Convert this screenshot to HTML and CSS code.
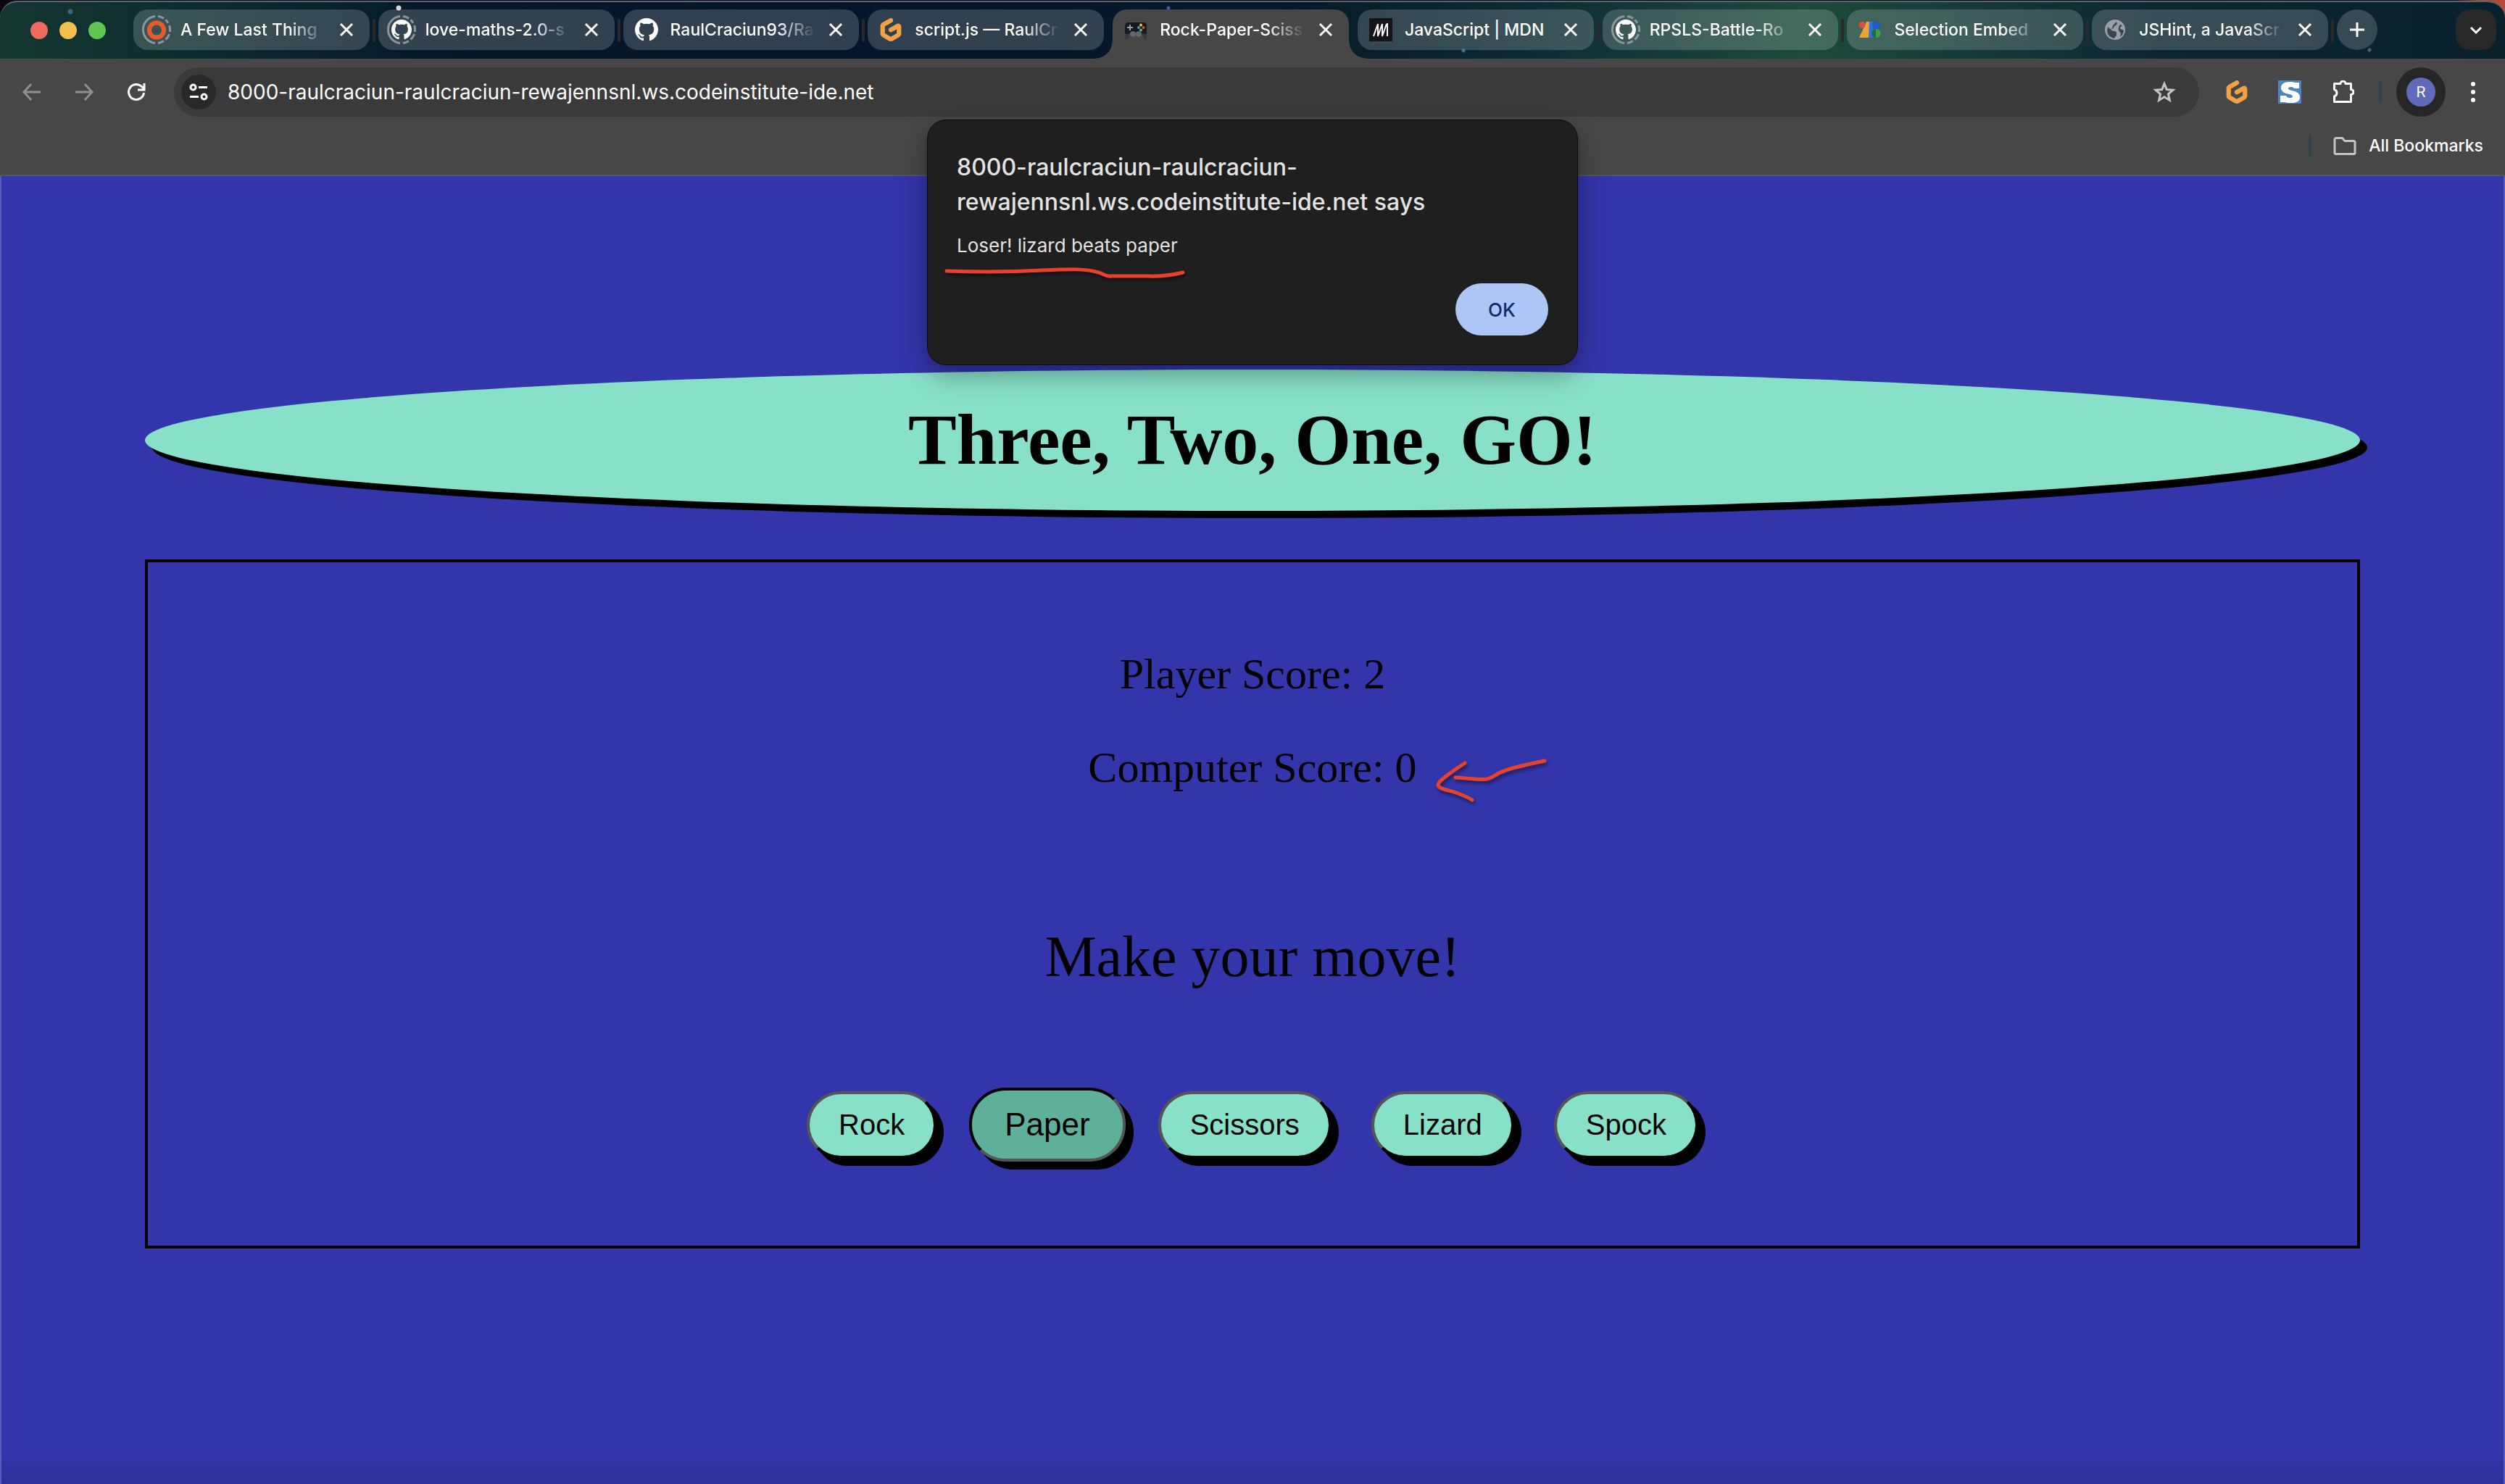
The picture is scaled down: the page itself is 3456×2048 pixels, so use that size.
FILE: index.html
```html
<!DOCTYPE html>
<html lang="en">
<head>
<meta charset="utf-8">
<title>Rock-Paper-Scissors-Lizard-Spock</title>
<link rel="stylesheet" href="styles.css">
</head>
<body>
<svg class="sprite" aria-hidden="true">
  <symbol id="github" viewBox="0 0 16 16"><path fill="#fff" d="M8 0C3.58 0 0 3.58 0 8c0 3.54 2.29 6.53 5.47 7.59.4.07.55-.17.55-.38 0-.19-.01-.82-.01-1.49-2.01.37-2.53-.49-2.69-.94-.09-.23-.48-.94-.82-1.13-.28-.15-.68-.52-.01-.53.63-.01 1.08.58 1.23.82.72 1.21 1.87.87 2.33.66.07-.52.28-.87.51-1.07-1.78-.2-3.64-.89-3.64-3.95 0-.87.31-1.59.82-2.15-.08-.2-.36-1.02.08-2.12 0 0 .67-.21 2.2.82.64-.18 1.32-.27 2-.27s1.36.09 2 .27c1.53-1.04 2.2-.82 2.2-.82.44 1.1.16 1.92.08 2.12.51.56.82 1.27.82 2.15 0 3.07-1.87 3.75-3.65 3.95.29.25.54.73.54 1.48 0 1.07-.01 1.93-.01 2.2 0 .21.15.46.55.38A8.01 8.01 0 0 0 16 8c0-4.42-3.58-8-8-8z"/></symbol>
  <symbol id="gitpod" viewBox="0 0 24 24"><path fill="#f3a145" d="M14.033 1.195a2.387 2.387 0 0 1-.87 3.235l-6.98 4.04a.602.602 0 0 0-.3.522v6.342a.6.6 0 0 0 .3.521l5.524 3.199a.585.585 0 0 0 .586 0l5.527-3.199a.603.603 0 0 0 .299-.52V11.39l-4.969 2.838a2.326 2.326 0 0 1-3.19-.9 2.388 2.388 0 0 1 .896-3.23l7.108-4.062C20.123 4.8 22.8 6.384 22.8 8.901v6.914a4.524 4.524 0 0 1-2.245 3.919l-6.345 3.672a4.407 4.407 0 0 1-4.422 0l-6.344-3.672A4.524 4.524 0 0 1 1.2 15.816V8.51a4.524 4.524 0 0 1 2.245-3.918l7.393-4.28a2.326 2.326 0 0 1 3.195.883z"/></symbol>
  <symbol id="ring" viewBox="0 0 40 40"><g fill="none" stroke="#8b979a" stroke-width="3"><path d="M18 1.600A18.500 18.500 0 0 0 18 38.400"/><path d="M22 38.400A18.500 18.500 0 0 0 30 35.600"/><path d="M32.500 33.600A18.500 18.500 0 0 0 37.600 26"/><path d="M38.300 23A18.500 18.500 0 0 0 37.600 14"/><path d="M36 10.700A18.500 18.500 0 0 0 32.500 6.400"/><path d="M30 4.400A18.500 18.500 0 0 0 22 1.600"/></g></symbol>
  <symbol id="close" viewBox="0 0 32 32"><path d="M8 8l16 16M24 8L8 24" fill="none" stroke="#fff" stroke-width="3"/></symbol>
</svg>

<header class="browser">
  <div class="tabstrip">
    <div class="lights"><span class="light light--close"></span><span class="light light--min"></span><span class="light light--max"></span></div>
    <nav class="tabs" aria-label="Tabs">
      <div class="tab">
        <svg class="tab__icon" viewBox="0 0 40 40"><use href="#ring"/><circle cx="20" cy="20.500" r="10" fill="none" stroke="#e95a2b" stroke-width="6"/><circle cx="20" cy="20.500" r="12" fill="none" stroke="#e95a2b" stroke-width="2" stroke-dasharray="4 1"/></svg>
        <a class="tab__title tab__title--fade" href="#">A Few Last Thing</a>
        <button class="tab__close" aria-label="Close tab"><svg class="ic32"><use href="#close"/></svg></button>
      </div>
      <div class="tab">
        <svg class="tab__icon" viewBox="0 0 40 40"><use href="#ring"/><use href="#github" x="6" y="6" width="28" height="28"/></svg>
        <a class="tab__title tab__title--fade" href="#">love-maths-2.0-s</a>
        <button class="tab__close" aria-label="Close tab"><svg class="ic32"><use href="#close"/></svg></button>
      </div>
      <div class="tab">
        <svg class="tab__icon" viewBox="0 0 40 40"><use href="#github" x="4" y="4" width="32" height="32"/></svg>
        <a class="tab__title tab__title--fade" href="#">RaulCraciun93/Ra</a>
        <button class="tab__close" aria-label="Close tab"><svg class="ic32"><use href="#close"/></svg></button>
      </div>
      <div class="tab tab--before">
        <svg class="tab__icon" viewBox="0 0 40 40"><use href="#gitpod" x="4" y="4" width="32" height="32"/></svg>
        <a class="tab__title tab__title--fade" href="#">script.js — RaulCr</a>
        <button class="tab__close" aria-label="Close tab"><svg class="ic32"><use href="#close"/></svg></button>
      </div>
      <div class="tab tab--active">
        <svg class="tab__icon" viewBox="0 0 40 40"><path d="M6 22l6 3-4 9-3-1zM34 22l-6 3 4 9 3-1z" fill="#39393b"/><path d="M9 10h22q3 0 4 4v12l-7-1-1 5h-5l-2-3-2 3h-5l-1-5-7 1V14q1-4 4-4z" fill="#18191c"/><path d="M12 13v8M8 17h8" stroke="#8fa0ae" stroke-width="2"/><circle cx="16" cy="26" r="4" fill="#5c6a74"/><circle cx="24" cy="26" r="4" fill="#5c6a74"/><circle cx="27" cy="13.500" r="2" fill="#f5c945"/><circle cx="24" cy="17" r="2" fill="#4a90e2"/><circle cx="30.500" cy="17" r="2" fill="#e0483c"/><circle cx="27" cy="20.500" r="2" fill="#5cb85c"/></svg>
        <a class="tab__title tab__title--fade" href="#">Rock-Paper-Sciss</a>
        <button class="tab__close" aria-label="Close tab"><svg class="ic32"><use href="#close"/></svg></button>
      </div>
      <div class="tab">
        <svg class="tab__icon" viewBox="0 0 40 40"><path fill="#15141a" d="M4 4h32v32H4z"/><path d="M10 29L16 12V29L22 12V29L28 12M29 11v18" fill="none" stroke="#fff" stroke-width="2"/></svg>
        <a class="tab__title" href="#">JavaScript | MDN</a>
        <button class="tab__close" aria-label="Close tab"><svg class="ic32"><use href="#close"/></svg></button>
      </div>
      <div class="tab">
        <svg class="tab__icon" viewBox="0 0 40 40"><use href="#ring"/><use href="#github" x="6" y="6" width="28" height="28"/></svg>
        <a class="tab__title tab__title--fade" href="#">RPSLS-Battle-Ro</a>
        <button class="tab__close" aria-label="Close tab"><svg class="ic32"><use href="#close"/></svg></button>
      </div>
      <div class="tab">
        <svg class="tab__icon" viewBox="0 0 40 40"><path d="M5 31L15 9h6v22z" fill="#e8a33d"/><circle cx="9" cy="13.500" r="4.500" fill="#de4b3f"/><path d="M19 9h6v22h-7z" fill="#2f6fde"/><circle cx="28.500" cy="14" r="5.500" fill="#2458c4"/><circle cx="28.500" cy="25" r="6" fill="#43a047"/><path d="M28 19v12a6 6 0 0 1 0-12z" fill="#1f6b45"/></svg>
        <a class="tab__title tab__title--fade" href="#">Selection Embed</a>
        <button class="tab__close" aria-label="Close tab"><svg class="ic32"><use href="#close"/></svg></button>
      </div>
      <div class="tab">
        <svg class="tab__icon" viewBox="0 0 40 40"><circle cx="20" cy="20" r="14" fill="#9aa0a4"/><path d="M22 9q2 3-1 5-3 1-3 4l-4 1q1 3 5 3 3 0 3 3v3q-2 1-3 4-9-2-10-10l1-6 3 3 3-1 1-4zM30 14l-3 3q0 3 4 3l1 2q-1 5-5 8l1-5-3-4q-1-5 2-8z" fill="#38494d"/></svg>
        <a class="tab__title tab__title--fade" href="#">JSHint, a JavaScr</a>
        <button class="tab__close" aria-label="Close tab"><svg class="ic32"><use href="#close"/></svg></button>
      </div>
    </nav>
    <button class="newtab" aria-label="New tab"><svg class="ic32" viewBox="0 0 32 32"><path d="M16 6v20M6 16h20" stroke="#fff" stroke-width="3"/></svg></button>
    <button class="tabsearch" aria-label="Search tabs"><svg class="ic32" viewBox="0 0 32 32"><path d="M9 13l7 7 7-7" fill="none" stroke="#fff" stroke-width="3"/></svg></button>
  </div>

  <div class="toolbar">
    <div class="navbtns">
      <button class="iconbtn" aria-label="Back"><svg class="ic32" viewBox="0 0 32 32"><path d="M28 16H6M15 5L5 16l10 11" fill="none" stroke="#8f8f8f" stroke-width="3"/></svg></button>
      <button class="iconbtn" aria-label="Forward"><svg class="ic32" viewBox="0 0 32 32"><path d="M4 16h22M17 5l10 11-10 11" fill="none" stroke="#8f8f8f" stroke-width="3"/></svg></button>
      <button class="iconbtn" aria-label="Reload"><svg class="ic32" viewBox="0 0 32 32"><path d="M26.500 17A10.500 10.500 0 1 1 23.500 8.500L27 12M27 4v9h-9" fill="none" stroke="#fff" stroke-width="3"/></svg></button>
    </div>
    <div class="omnibox">
      <button class="sitechip" aria-label="Site information"><svg class="ic32" viewBox="0 0 32 32"><g fill="none" stroke="#fff" stroke-width="3"><circle cx="8.500" cy="9.500" r="3.500"/><path d="M16 9.500h12M4 22.500h12"/><circle cx="23.500" cy="22.500" r="3.500"/></g></svg></button>
      <input class="url" type="text" aria-label="Address" value="8000-raulcraciun-raulcraciun-rewajennsnl.ws.codeinstitute-ide.net">
      <button class="iconbtn" aria-label="Bookmark this tab"><svg class="ic32" viewBox="0 0 32 32"><path d="M16 4.500l3.300 8 8.700.700-6.600 5.700 2 8.500L16 22.800l-7.400 4.600 2-8.500L4 13.200l8.700-.700z" fill="none" stroke="#c4c4c4" stroke-width="3"/></svg></button>
    </div>
    <button class="iconbtn ext" aria-label="Gitpod"><svg class="ic32"><use href="#gitpod"/></svg></button>
    <button class="iconbtn ext" aria-label="Stylus"><svg class="ic32" viewBox="0 0 32 32"><path fill="#4b86c2" d="M0 0h32v32H0z"/><path d="M29 3v8h-7q-1-2-4-2-4 0-4 2t5 3q11 2 11 9 0 8-12 8-6 0-8-1H3v-9h8q1 3 5 3t4-2-5-3Q4 17 4 10.500 4 2 16 2q5 0 7 1z" fill="#fff"/></svg></button>
    <button class="iconbtn ext" aria-label="Extensions"><svg class="ic32" viewBox="0 0 32 32"><path d="M4.500 4.500H13a3.500 3.500 0 0 1 7 0H27.500V12.500a3.500 3.500 0 0 1 0 7V29.500H4.500V22a5 5 0 0 0 0-9.500z" fill="none" stroke="#fff" stroke-width="3" stroke-linejoin="round"/></svg></button>
    <span class="divider"></span>
    <button class="avatar" aria-label="Profile"><span class="avatar__face">R</span></button>
    <button class="iconbtn menu" aria-label="Menu"><svg class="ic32" viewBox="0 0 32 32"><g fill="#fff"><circle cx="16" cy="5" r="3"/><circle cx="16" cy="16" r="3"/><circle cx="16" cy="27" r="3"/></g></svg></button>
  </div>

  <div class="bookmarks">
    <span class="divider"></span>
    <button class="bookmarks__all"><svg class="ic32" viewBox="0 0 32 32"><path d="M4 5.500h8.500l3.500 4h12a2 2 0 0 1 2 2V26a1.500 1.500 0 0 1-1.500 1.500h-25A1.500 1.500 0 0 1 2 26V7.500a2 2 0 0 1 2-2z" fill="none" stroke="#c4c4c4" stroke-width="3"/></svg>All Bookmarks</button>
  </div>
</header>

<main class="game">
  <h1 class="game__title">Three, Two, One, GO!</h1>
  <section class="board">
    <p class="score">Player Score: 2</p>
    <p class="score score--marked">Computer Score: 0
      <svg class="arrow" viewBox="0 0 170 70"><path d="M54 12C36 24 18 36 17 42C17 48 30 49 42 53Q56 58 64 63M41 32C62 33 73 36 85 34C94 32 98 26 108 23Q120 18 164 9" fill="none" stroke="#e8432a" stroke-width="5" stroke-linecap="round"/></svg>
    </p>
    <p class="prompt">Make your move!</p>
    <div class="moves">
      <button class="move">Rock</button>
      <button class="move move--pressed">Paper</button>
      <button class="move">Scissors</button>
      <button class="move">Lizard</button>
      <button class="move">Spock</button>
    </div>
  </section>
</main>

<dialog class="alert" open>
  <h2 class="alert__title">8000-raulcraciun-raulcraciun-<br>rewajennsnl.ws.codeinstitute-ide.net says</h2>
  <p class="alert__text">Loser! lizard beats paper
    <svg class="underline" viewBox="0 0 340 24"><path d="M8 9C60 11 105 10 140 8C185 6 200 6 218 11C228 15 230 17 235 16H285Q310 17 334 11" fill="none" stroke="#e8432a" stroke-width="5" stroke-linecap="round"/></svg>
  </p>
  <form class="alert__actions" method="dialog"><button class="alert__ok">OK</button></form>
</dialog>
</body>
</html>
```
FILE: styles.css
```css
* { box-sizing: border-box; }

html { background: linear-gradient(90deg, #0c0614 98%, #b34a3a 99%); }

body {
  margin: 0;
  min-height: 100vh;
  position: relative;
  display: flex;
  flex-direction: column;
  color: #000;
  font-family: "Liberation Serif", serif;
}

button, input {
  margin: 0;
  padding: 0;
  border: 0;
  background: none;
  color: inherit;
  font: inherit;
}

.sprite { position: absolute; width: 0; height: 0; }
.ic32 { display: block; width: 32px; height: 32px; flex: none; }

/* Browser chrome */
.browser {
  margin-top: 1px;
  border-bottom: 2px solid #565656;
  border-radius: 24px 24px 0 0;
  background: #474747;
  color: #fff;
  font-family: Inter, sans-serif;
  font-size: 23px;
  font-weight: 500;
}

.tabstrip {
  display: flex;
  align-items: flex-start;
  height: 80px;
  padding: 10px 12px 0 42px;
  border-top: 2px solid #59656b;
  border-radius: 24px 24px 0 0;
  background:
    radial-gradient(circle at 97px 13px, #2c6a8c 3px, transparent 4px),
    radial-gradient(circle at 550px 8px, #d9d4ee 3px, transparent 4px),
    radial-gradient(circle at 1612px 8px, #4c50b8 2px, transparent 3px),
    radial-gradient(circle at 2019px 67px, #3a6f8c 2px, transparent 3px),
    radial-gradient(circle at 3269px 66px, #3c6a6c 2px, transparent 3px),
    linear-gradient(90deg, #14362f 0, #0c2a2e 9%, #05192a 17%, #04162a 34%, #051a28 52%, #0d2b33 61%, #1d4a3c 72%, #173e38 77%, #0c2730 86%, #08202c 100%);
}

.lights { display: flex; gap: 16px; padding-top: 17px; margin-right: 38px; }
.light { width: 24px; height: 24px; border-radius: 50%; }
.light--close { background: #ed6a5e; }
.light--min { background: #f5bf4f; }
.light--max { background: #61c554; }

.tabs { display: flex; flex: 0 1 3028px; gap: 12px; min-width: 0; }

.tab {
  position: relative;
  display: flex;
  align-items: center;
  flex: 1 1 0;
  min-width: 0;
  height: 56px;
  padding: 0 16px 0 12px;
  border-radius: 20px;
  background: rgba(255, 255, 255, .18);
}
.tab::after {
  content: "";
  position: absolute;
  top: 13px;
  right: -8px;
  width: 4px;
  height: 32px;
  border-radius: 2px;
  background: #2a2929;
}
.tab--before::after { display: none; }
.tab--active {
  z-index: 1;
  height: 68px;
  padding-bottom: 12px;
  border-radius: 20px 20px 0 0;
  background: #474747;
}
.tab--active::before, .tab--active::after {
  content: "";
  position: absolute;
  top: auto;
  bottom: 0;
  width: 24px;
  height: 24px;
  border-radius: 0;
}
.tab--active::before { left: -24px; background: radial-gradient(circle at 0 0, transparent 23px, #474747 24px); }
.tab--active::after { right: -24px; background: radial-gradient(circle at 100% 0, transparent 23px, #474747 24px); }

.tab__icon { flex: none; width: 40px; height: 40px; }
.tab__title {
  flex: 1 1 0;
  min-width: 0;
  margin: 0 10px 0 13px;
  white-space: nowrap;
  line-height: 32px;
  color: inherit;
  text-decoration: none;
}
.tab__title--fade {
  -webkit-mask-image: linear-gradient(90deg, #000 73%, transparent 99%);
  mask-image: linear-gradient(90deg, #000 73%, transparent 99%);
}
.tab__close { flex: none; }

.newtab, .tabsearch {
  display: grid;
  place-items: center;
  flex: none;
  width: 56px;
  height: 56px;
  margin-left: 12px;
  border-radius: 28px;
  background: rgba(255, 255, 255, .18);
}
.tabsearch { margin-left: auto; border-radius: 20px; background: #282828; }

.toolbar {
  display: flex;
  align-items: center;
  height: 92px;
  padding: 0 28px;
}
.navbtns { display: flex; gap: 40px; margin-right: 36px; }
.iconbtn { flex: none; }
.omnibox {
  display: flex;
  align-items: center;
  flex: 1;
  min-width: 0;
  height: 68px;
  margin-right: 8px;
  padding: 0 32px 0 10px;
  border-radius: 34px;
  background: #3a3a3a;
}
.sitechip {
  display: grid;
  place-items: center;
  flex: none;
  width: 48px;
  height: 48px;
  border-radius: 50%;
  background: #282828;
}
.url {
  flex: 1;
  min-width: 0;
  margin: 0 16px;
  font-size: 28px;
  font-weight: 400;
  outline: none;
}
.ext { margin-left: 41px; }
.omnibox + .ext { margin-left: 28px; }
.divider {
  flex: none;
  width: 4px;
  height: 32px;
  margin: 0 20px 0 34px;
  border-radius: 2px;
  background: #30454b;
}
.avatar {
  display: grid;
  place-items: center;
  flex: none;
  width: 68px;
  height: 68px;
  border-radius: 50%;
  background: #262626;
}
.avatar__face {
  display: grid;
  place-items: center;
  width: 40px;
  height: 40px;
  border-radius: 50%;
  background: #5f6abb;
  font-family: Roboto, sans-serif;
  font-size: 21px;
  font-weight: 400;
}
.menu { margin-left: 22px; }

.bookmarks {
  display: flex;
  justify-content: flex-end;
  align-items: center;
  height: 68px;
  padding: 0 30px 12px;
}
.bookmarks .divider { margin: 0 30px 0 0; }
.bookmarks__all { display: flex; align-items: center; gap: 17px; }

/* Game page */
.game {
  flex: 1;
  padding: 267px 198px 120px;
  text-align: center;
  border: solid #5a5cbb;
  border-width: 0 2px;
  background: linear-gradient(0deg, #2f319b, #3335ab 40px);
}
.game__title {
  margin: 0 0 67px;
  padding: 39px 20px 41px;
  border-radius: 50%;
  background: #88e0c8;
  box-shadow: 10px 10px 0 #000;
  font-size: 100px;
  line-height: 115px;
}
.board {
  display: flex;
  flex-direction: column;
  padding: 120px 40px 116px;
  border: 4px solid #000;
}
.score { margin: 0 0 60px; font-size: 60px; line-height: 69px; }
.score--marked { position: relative; margin-bottom: 180px; }
.arrow {
  position: absolute;
  top: 16px;
  left: calc(50% + 239px);
  width: 170px;
  height: 70px;
  filter: drop-shadow(2px 4px 2px rgba(0, 0, 0, .4));
}
.prompt { margin: 0 0 135px; font-size: 80px; line-height: 92px; }
.moves {
  display: flex;
  justify-content: center;
  align-items: center;
  gap: 55px;
  font-family: "Liberation Sans", sans-serif;
  font-size: 40px;
  line-height: 45px;
}
.move {
  padding: 20px 40px;
  border: 4px solid;
  border-color: #555 #000 #000 #555;
  border-radius: 50px;
  background: #88e0c8;
  box-shadow: 10px 10px 0 #000;
}
.move--pressed {
  margin: 0 -10px;
  padding: 22px 45px;
  border-color: #000 #555 #555 #000;
  background: #5eb09a;
  box-shadow: 11px 11px 0 #000;
  font-size: 44px;
  line-height: 50px;
}

/* Alert box, laid over the toolbar and the page */
.alert {
  position: absolute;
  top: 165px;
  left: 0;
  right: 0;
  z-index: 2;
  width: 898px;
  max-width: 90%;
  margin: 0 auto;
  padding: 41px 40px 40px;
  border: 1px solid #0c0c0c;
  border-radius: 26px;
  background: #1f1f1f;
  box-shadow: 0 12px 36px rgba(0, 0, 0, .35);
  color: #e3e3e3;
  font-family: Inter, sans-serif;
}
.alert__title { margin: 0 0 16px; font-size: 32px; font-weight: 500; line-height: 48px; }
.alert__text { position: relative; margin: 0 0 32px; font-size: 26px; line-height: 40px; }
.underline {
  position: absolute;
  top: 46px;
  left: -22px;
  width: 340px;
  height: 24px;
  filter: drop-shadow(2px 3px 2px rgba(0, 0, 0, .5));
}
.alert__actions { display: flex; justify-content: flex-end; }
.alert__ok {
  width: 128px;
  height: 72px;
  border-radius: 36px;
  background: #adc6f5;
  color: #0b2b6f;
  font-size: 26px;
  font-weight: 500;
}
```
